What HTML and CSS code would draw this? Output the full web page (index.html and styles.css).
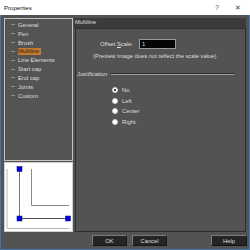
FILE: index.html
```html
<!DOCTYPE html>
<html lang="en">
<head>
  <meta charset="UTF-8" />
  <title>Properties</title>
  <link rel="stylesheet" href="styles.css">
</head>
<body>
  <div class="window">

    <!-- ───── title bar ───── -->
    <div class="titlebar">
      <span class="title">Properties</span>
      <span class="tb-btn">?</span>
      <span class="tb-btn close">✕</span>
    </div>

    <div class="frame">
      <div class="main">

        <!-- ───── left column: tree + preview ───── -->
        <div class="side">
          <ul class="tree">
            <li><span class="dash"></span>General</li>
            <li><span class="dash"></span>Pen</li>
            <li><span class="dash"></span>Brush</li>
            <li class="selected"><span class="dash"></span><span class="label">Multiline</span></li>
            <li><span class="dash"></span>Line Elements</li>
            <li><span class="dash"></span>Start cap</li>
            <li><span class="dash"></span>End cap</li>
            <li><span class="dash"></span>Joints</li>
            <li><span class="dash"></span>Custom</li>
          </ul>

          <div class="preview">
            <svg width="67" height="67" viewBox="0 0 67 67">
              <line x1="2" y1="5" x2="2" y2="64" stroke="#b4b4b4" stroke-width="1" />
              <line x1="2" y1="64.5" x2="64" y2="64.5" stroke="#b4b4b4" stroke-width="1" />
              <line x1="26.5" y1="5" x2="26.5" y2="41.5" stroke="#8a8a8a" stroke-width="1" />
              <line x1="26.5" y1="41.5" x2="64" y2="41.5" stroke="#8a8a8a" stroke-width="1" />
              <line x1="14.5" y1="5" x2="14.5" y2="54.5" stroke="#7a7a7a" stroke-width="1" />
              <line x1="14.5" y1="54.5" x2="63" y2="54.5" stroke="#505050" stroke-width="1" />
              <rect class="handle" x="12" y="2.5" width="5" height="5" />
              <rect class="handle" x="12" y="52" width="5" height="5" />
              <rect class="handle" x="60.5" y="52" width="5" height="5" />
            </svg>
          </div>
        </div>

        <!-- ───── right column: page ───── -->
        <div class="page">
          <div class="page-head">Multiline</div>
          <div class="page-body">
            <div class="scale-row">
              <span class="scale-label">Offset <u>S</u>cale:</span>
              <span class="textbox">1</span>
            </div>
            <p class="note">(Preview image does not reflect the scale value)</p>

            <div class="group-title">
              <span>Justification</span>
              <span class="rule"></span>
            </div>

            <ul class="radios">
              <li><span class="radio checked"></span>No</li>
              <li><span class="radio"></span>Left</li>
              <li><span class="radio"></span>Center</li>
              <li><span class="radio"></span>Right</li>
            </ul>
          </div>
        </div>
      </div>

      <!-- ───── buttons ───── -->
      <div class="footer">
        <button class="btn">OK</button>
        <button class="btn">Cancel</button>
        <span class="spacer"></span>
        <button class="btn help">Help</button>
      </div>
    </div>
  </div>
</body>
</html>
```

FILE: styles.css
```css
:root {
  --c-text:      #dedede;
  --c-frame:     #3c78b4;
  --c-dark-edge: #2c2c2c;
  --c-light-edge:#c4c4c4;

  --bg-window:   #535353;
  --bg-head:     #3b3b3b;
  --bg-input:    #050505;
  --bg-btn:      #252525;
  --bg-select:   #c27a35;

  --font-ui: "Liberation Sans", Arial, sans-serif;
}

* { box-sizing: border-box; }

body {
  margin: 0;
  font-family: var(--font-ui);
  font-size: 5.8px;
  color: var(--c-text);
}

ul { margin: 0; padding: 0; list-style: none; }
p  { margin: 0; }

/* ───── window ───── */
.window {
  width: 250px;
  height: 250px;
  display: flex;
  flex-direction: column;
  background: var(--bg-window);
}

.titlebar {
  height: 15px;
  flex: none;
  display: flex;
  align-items: center;
  background: #fff;
  color: #111;
  padding: 0 4px;
}
.title    { flex: 1; font-size: 6.1px; }
.tb-btn   { width: 16px; text-align: center; color: #444; font-size: 6.4px; }
.tb-btn.close { margin-left: 5px; font-size: 7px; }

.frame {
  flex: 1;
  display: flex;
  flex-direction: column;
  border: 1px solid var(--c-frame);
  border-top: none;
}

.main {
  height: 217px;
  display: flex;
  padding: 3px 3px 0;
  gap: 1px;
}

/* ───── left column ───── */
.side {
  width: 69px;
  display: flex;
  flex-direction: column;
  gap: 1px;
}

.tree {
  height: 144px;
  border: 1px solid var(--c-light-edge);
  background: #545454;
  padding-top: 1.5px;
}
.tree li {
  height: 8.85px;
  display: flex;
  align-items: center;
  white-space: nowrap;
}
.dash {
  width: 4px;
  height: 0;
  border-top: 1px solid #8c8c8c;
  margin: 0 3px 0 6px;
}
.tree li.selected .label {
  background: var(--bg-select);
  color: #2a1a0a;
  padding: 0 2px 0 0;
  line-height: 7px;
}

.preview {
  height: 70px;
  background: #fff;
  border: 1px solid #d0d0d0;
}
.preview svg { display: block; margin: 1px 0 0 0; }
.handle { fill: #0000e6; stroke: #101050; stroke-width: 0.5; }

/* ───── right column ───── */
.page {
  flex: 1;
  display: flex;
  flex-direction: column;
}
.page-head {
  height: 10px;
  flex: none;
  background: var(--bg-head);
  padding: 0 1px;
  line-height: 9px;
}
.page-body {
  flex: 1;
  margin-left: 1px;
  border: 1px solid var(--c-dark-edge);
  border-top-color: #303030;
  padding: 10px 0 0 0;
}

.scale-row {
  display: flex;
  align-items: center;
  padding-left: 24px;
  gap: 6px;
}
.textbox {
  width: 37px;
  height: 10px;
  background: var(--bg-input);
  border: 1px solid #9a9a9a;
  padding-left: 2px;
  line-height: 8px;
}

.note {
  margin: 4px 0 0 17px;
}

.group-title {
  display: flex;
  align-items: center;
  gap: 4px;
  margin: 12px 11px 0 1px;
}
.rule {
  flex: 1;
  height: 2px;
  border-top: 1px solid #2e2e2e;
  border-bottom: 1px solid #a0a0a0;
}

.radios {
  margin: 8px 0 0 36px;
}
.radios li {
  height: 10.6px;
  display: flex;
  align-items: center;
  gap: 4px;
}
.radio {
  width: 6px;
  height: 6px;
  border-radius: 50%;
  background: #fff;
  border: 1px solid #d0d0d0;
  display: flex;
  align-items: center;
  justify-content: center;
}
.radio.checked::after {
  content: "";
  width: 2px;
  height: 2px;
  border-radius: 50%;
  background: #000;
}

/* ───── footer ───── */
.footer {
  flex: 1;
  display: flex;
  align-items: flex-start;
  padding: 3px 2px 0 91px;
  gap: 5px;
}
.spacer { flex: 1; }
.btn {
  width: 35px;
  height: 11px;
  padding: 0;
  background: var(--bg-btn);
  color: var(--c-text);
  font-family: var(--font-ui);
  font-size: 5.8px;
  border: 1px solid #7a7a7a;
  border-right-color: #161616;
  border-bottom-color: #161616;
}
.btn.help { width: 36px; }
```
